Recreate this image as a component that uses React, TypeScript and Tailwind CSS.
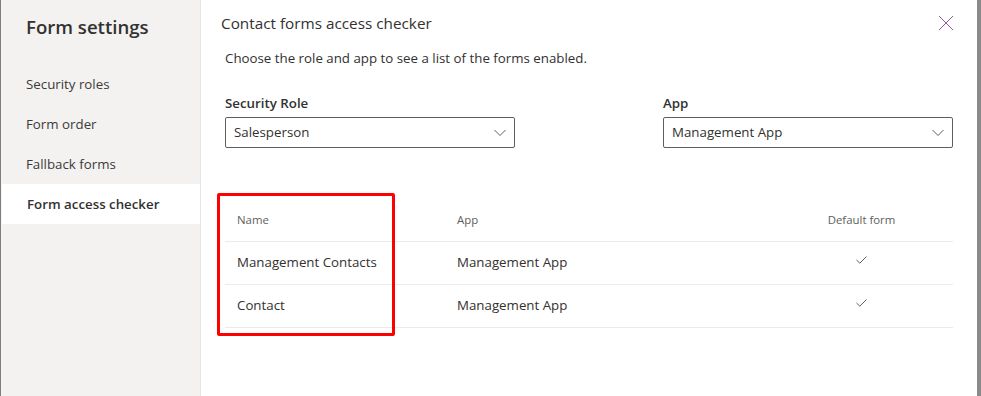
import React from "react";

/* ---------------- DATA ---------------- */
const NAV_ITEMS = ["Security roles", "Form order", "Fallback forms", "Form access checker"];

const ROWS = [
  { name: "Management Contacts", app: "Management App", isDefault: true },
  { name: "Contact", app: "Management App", isDefault: true },
];

const FONT = "font-['Segoe_UI','Open_Sans',sans-serif]";

/* ---------------- ICONS ---------------- */
const Chevron = () => (
  <svg width="12" height="8" viewBox="0 0 12 8" fill="none">
    <path d="M0.5 1 L6 6.5 L11.5 1" stroke="#605e5c" strokeWidth="1" />
  </svg>
);

const Check = () => (
  <svg width="11" height="8" viewBox="0 0 11 8" fill="none">
    <path d="M0.5 4 L3.8 7.2 L10.5 0.5" stroke="#605e5c" strokeWidth="1" />
  </svg>
);

/* ---------------- PARTS ---------------- */
const Dropdown: React.FC<{ label: string; value: string }> = ({ label, value }) => (
  <div className="flex flex-col w-[290px]">
    <label className="text-[13.3px] font-semibold text-[#323130] leading-[20px] h-[28px] pt-[4px]">{label}</label>
    <div className="h-[31px] border border-[#605e5c] rounded-[2px] flex items-center justify-between pl-[8px] pr-[8px]">
      <span className="text-[13.3px] text-[#323130]">{value}</span>
      <Chevron />
    </div>
  </div>
);

const App: React.FC = () => {
  return (
    <div className={`w-[981px] h-[396px] flex bg-white overflow-hidden ${FONT}`}>
      {/* Sidebar */}
      <aside className="w-[201px] h-full bg-[#f3f2f1] border-l border-[#7f7f7f] border-r border-r-[#e6e6e6] flex flex-col">
        <h1 className="text-[18.6px] font-semibold text-[#323130] pl-[25px] pt-[13px] h-[64px]">Form settings</h1>
        {NAV_ITEMS.map((item, i) => {
          const active = i === NAV_ITEMS.length - 1;
          return (
            <div
              key={item}
              className={`h-[40px] flex items-center pl-[25px] pt-[2px] text-[13.3px] ${
                active ? "bg-white font-semibold text-[#323130] ml-[1px]" : "text-[#3b3a39]"
              }`}
            >
              {item}
            </div>
          );
        })}
      </aside>

      {/* Main panel */}
      <main className="relative flex-1 h-full pl-[20px] pr-[24px]">
        <div className="flex items-start justify-between pt-[12px] h-[44px]">
          <h2 className="text-[15.3px] font-medium text-[#323130] leading-[22px]">Contact forms access checker</h2>
          <button className="mt-[3px] -mr-[1px]">
            <svg width="16" height="16" viewBox="0 0 16 16" fill="none">
              <path d="M1 1 L15 15 M15 1 L1 15" stroke="#9b55a0" strokeWidth="1" />
            </svg>
          </button>
        </div>

        <div className="pl-[4px]">
          <p className="text-[13.3px] text-[#323130] leading-[20px] h-[40px] pt-[4px]">
            Choose the role and app to see a list of the forms enabled.
          </p>

          <div className="flex justify-between pt-[5px]">
            <Dropdown label="Security Role" value="Salesperson" />
            <Dropdown label="App" value="Management App" />
          </div>

          {/* Table */}
          <div className="mt-[45px] text-[#323130]">
            <div className="flex h-[49px] items-center border-b border-[#edebe9] text-[11.4px] text-[#605e5c] pt-[6px]">
              <div className="w-[220px] pl-[12px]">Name</div>
              <div className="w-[325px] pl-[12px]">App</div>
              <div className="flex-1 text-center">Default form</div>
            </div>
            {ROWS.map((row) => (
              <div key={row.name} className="flex h-[43px] items-center border-b border-[#edebe9] text-[13.3px]">
                <div className="w-[220px] pl-[12px]">{row.name}</div>
                <div className="w-[325px] pl-[12px]">{row.app}</div>
                <div className="flex-1 flex justify-center pb-[6px]">{row.isDefault && <Check />}</div>
              </div>
            ))}
          </div>
        </div>

        {/* Annotation highlight */}
        <div className="absolute left-[16px] top-[193px] w-[178px] h-[143px] border-[3px] border-[#ff0000] rounded-[2px] pointer-events-none" />
      </main>

      {/* Backdrop edge */}
      <div className="w-[4px] h-full bg-[#8a8a8a]" />
    </div>
  );
};

export default App;
